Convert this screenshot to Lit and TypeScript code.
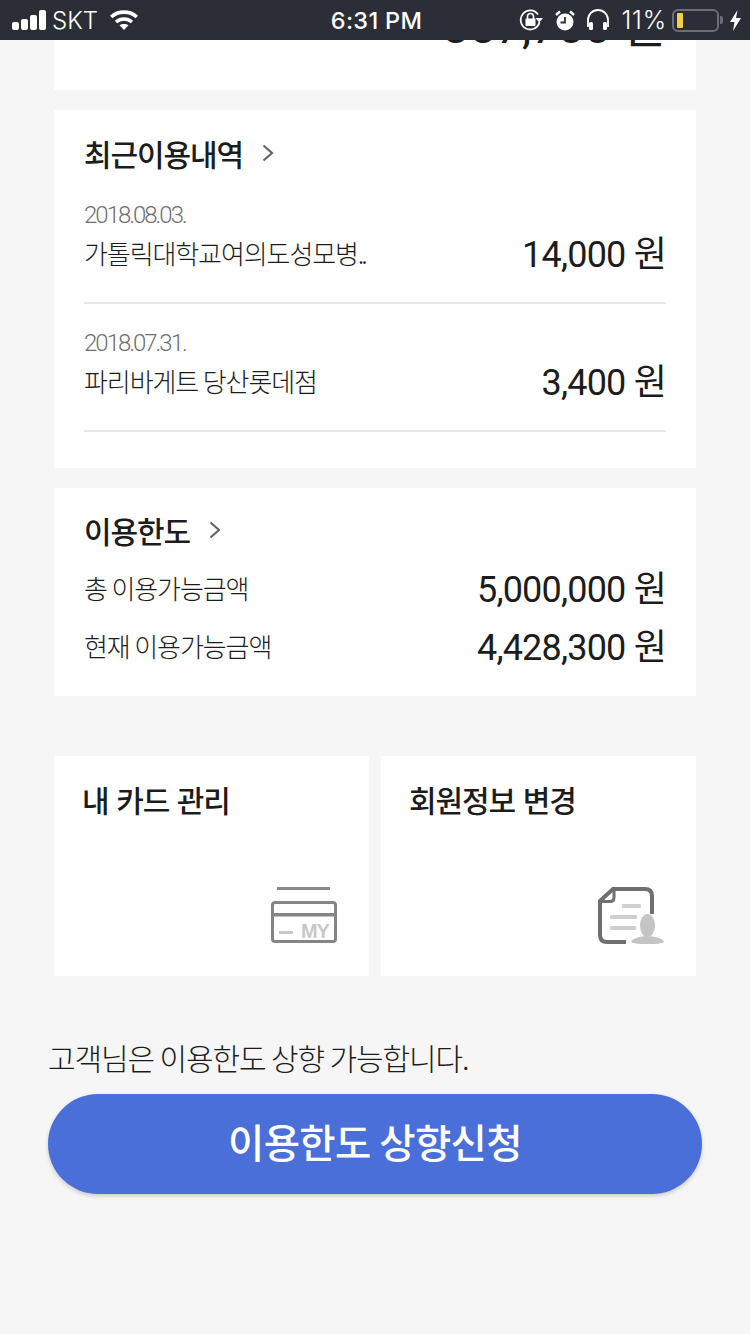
import { LitElement, css, html, svg, unsafeCSS } from 'lit';
import { customElement } from 'lit/decorators.js';

const FONT = unsafeCSS(`'Noto Sans CJK KR', 'Noto Sans', sans-serif`);
const NUM_FONT = unsafeCSS(`Roboto, 'Noto Sans CJK KR', sans-serif`);

const chevron = html`<svg class="chev" width="14" height="20" viewBox="0 0 14 20">
  <path d="M2.5 2.5 L11 10 L2.5 17.5" fill="none" stroke="#666" stroke-width="2.2" />
</svg>`;

const cardIcon = html`<svg width="66" height="57" viewBox="0 0 66 57">
  <rect x="6" y="0" width="53" height="3" fill="#8a8a8a" />
  <rect x="1.5" y="15.5" width="63" height="39" rx="2.5" fill="none" stroke="#858585" stroke-width="3" />
  <rect x="1.5" y="26" width="63" height="3.5" fill="#858585" />
  <rect x="8" y="44" width="14" height="3" fill="#c8c8c8" />
  <text x="30" y="50.5" font-family="'Liberation Sans', sans-serif" font-size="20" font-weight="700" fill="#c8c8c8">MY</text>
</svg>`;

const docIcon = html`<svg width="66" height="57" viewBox="0 0 66 57">
  <path d="M28 55 H9 Q2 55 2 48 V14 L15 2 H47 Q54 2 54 9 V27" fill="none" stroke="#6f6f6f" stroke-width="4" />
  <path d="M3 14.5 H12 Q16 14.5 16 10.5 V2" fill="none" stroke="#6f6f6f" stroke-width="3" />
  <rect x="24" y="17" width="19" height="4" rx="1" fill="#cfcfcf" />
  <rect x="12" y="28" width="27" height="4" rx="1" fill="#cfcfcf" />
  <rect x="12" y="39" width="26" height="4" rx="1" fill="#cfcfcf" />
  <ellipse cx="49.5" cy="38.5" rx="7.5" ry="11.5" fill="#c4c4c4" />
  <path d="M33 55 C36 48 62 47 66 55 C62 58 38 58 33 55 Z" fill="#c4c4c4" />
</svg>`;

const wifiPaths = svg`
  <path d="M1.2 7 C8 0.5 20 0.5 26.8 7" fill="none" stroke="#fff" stroke-width="3.6" />
  <path d="M6 12 C10.5 8 17.5 8 22 12" fill="none" stroke="#fff" stroke-width="3.4" />
  <path d="M9.5 15.3 C12 13.4 16 13.4 18.5 15.3 L14 20 Z" fill="#fff" />`;

@customElement('status-bar')
export class StatusBar extends LitElement {
  static styles = css`
    :host {
      display: flex;
      align-items: center;
      justify-content: space-between;
      position: relative;
      height: 40px;
      background: #2b2e37;
      color: #fff;
      font-family: 'Inter', 'Liberation Sans', sans-serif;
      padding: 0 9px 0 12px;
      box-sizing: border-box;
    }
    .side {
      display: flex;
      align-items: center;
      width: 300px;
    }
    .right {
      justify-content: flex-end;
    }
    .time {
      font-weight: 500;
      font-size: 23.5px;
      letter-spacing: 0.3px;
    }
    .carrier {
      margin: 0 12px 0 6px;
      font-size: 24px;
      font-weight: 300;
    }
    .signal {
      display: flex;
      align-items: flex-end;
      gap: 2px;
      height: 20px;
    }
    .signal i {
      width: 7px;
      border-radius: 2px;
      background: #fff;
    }
    .pct {
      font-weight: 300;
      margin: 0 5px 0 11px;
      font-size: 25px;
      letter-spacing: 0.8px;
    }
    .batt {
      width: 47px;
      height: 23px;
      border: 2px solid #6c6e74;
      border-radius: 6px;
      box-sizing: border-box;
      padding: 2px 3px;
    }
    .batt i {
      display: block;
      width: 6px;
      height: 100%;
      background: #f5cf45;
      border-radius: 1px;
    }
    .nub {
      width: 3px;
      height: 8px;
      background: #6c6e74;
      margin: 0 7px 0 1px;
      border-radius: 0 2px 2px 0;
    }
    svg {
      display: block;
    }
    .lock {
      margin-right: 12px;
    }
    .alarm {
      margin-right: 11px;
    }
  `;

  render() {
    return html`
      <div class="side">
        <div class="signal">
          <i style="height:8px"></i><i style="height:11px"></i><i style="height:15px"></i><i style="height:20px"></i>
        </div>
        <span class="carrier">SKT</span>
        <svg width="28" height="20" viewBox="0 0 28 20">${wifiPaths}</svg>
      </div>
      <span class="time">6:31 PM</span>
      <div class="side right">
        <svg class="lock" width="24" height="22" viewBox="0 0 24 22">
          <path d="M19 5.5 A9.5 9.5 0 1 0 20.5 13" fill="none" stroke="#fff" stroke-width="1.8" />
          <path d="M16.5 9 L24 9 L20.2 13.5 Z" fill="#fff" />
          <rect x="6.5" y="9.5" width="10" height="7.5" rx="1" fill="#fff" />
          <path d="M8.5 10 V7.5 A3 3 0 0 1 14.5 7.5 V10" fill="none" stroke="#fff" stroke-width="1.6" />
        </svg>
        <svg class="alarm" width="20" height="21" viewBox="0 0 20 21">
          <circle cx="10" cy="12" r="8.5" fill="#fff" />
          <path d="M10 7 V12.5 H5.5" fill="none" stroke="#2b2e37" stroke-width="1.8" />
          <path d="M1 5 L5 1.5 M19 5 L15 1.5" stroke="#fff" stroke-width="2.4" />
        </svg>
        <svg width="24" height="22" viewBox="0 0 24 22">
          <path d="M2 18 V11 A10 10 0 0 1 22 11 V18" fill="none" stroke="#fff" stroke-width="1.8" />
          <rect x="3" y="13" width="4" height="8" rx="1.5" fill="#fff" />
          <rect x="17" y="13" width="4" height="8" rx="1.5" fill="#fff" />
        </svg>
        <span class="pct">11%</span>
        <div class="batt"><i></i></div>
        <div class="nub"></div>
        <svg width="11" height="21" viewBox="0 0 11 21">
          <path d="M7.5 0 L0 12 H4.5 L3 21 L11 8 H6 Z" fill="#fff" />
        </svg>
      </div>
    `;
  }
}

@customElement('app-root')
export class AppRoot extends LitElement {
  static styles = css`
    :host {
      display: block;
      width: 750px;
      height: 1334px;
      overflow: hidden;
      background: #f6f6f6;
      font-family: ${FONT};
      color: #1c1c1c;
    }
    main {
      padding: 0 54px;
    }
    .card {
      background: #fff;
      box-sizing: border-box;
    }
    .top {
      height: 50px;
      overflow: hidden;
      margin-bottom: 20px;
      padding-right: 30px;
      text-align: right;
    }
    .top .amount {
      margin: -37px 0 0;
      font-size: 47px;
      letter-spacing: 0.1px;
    }
    .recent {
      height: 358px;
      padding: 20px 30px 0;
      margin-bottom: 20px;
    }
    .limit {
      height: 208px;
      padding: 19px 30px 0;
      margin-bottom: 60px;
    }
    .head {
      display: flex;
      align-items: center;
      gap: 18px;
      height: 46px;
      font-size: 30px;
      font-weight: 500;
      letter-spacing: -1.1px;
    }
    .chev {
      display: block;
    }
    .tx {
      height: 128px;
      border-bottom: 2px solid #e6e6e6;
      box-sizing: border-box;
      padding-top: 26px;
    }
    .date {
      font-family: ${NUM_FONT};
      font-size: 24px;
      line-height: 26px;
      font-weight: 300;
      color: #6f6f6f;
      letter-spacing: -2px;
    }
    .row {
      display: flex;
      align-items: center;
      justify-content: space-between;
    }
    .name {
      font-size: 26px;
      font-weight: 300;
      letter-spacing: -1.1px;
    }
    .dots {
      letter-spacing: -3px;
    }
    .amount {
      font-family: ${NUM_FONT};
      font-size: 36px;
      line-height: 48px;
      font-weight: 400;
      letter-spacing: -0.8px;
      white-space: nowrap;
      margin: 3px 0 -3px;
    }
    .limit .head {
      margin-bottom: 5px;
    }
    .limit .row {
      height: 58px;
    }
    .tiles {
      display: grid;
      grid-template-columns: 315px 315px;
      gap: 12px;
      margin-bottom: 59px;
    }
    .tile {
      height: 220px;
      display: flex;
      flex-direction: column;
      justify-content: space-between;
      padding: 20px 32px 32px 28px;
      font-size: 30px;
      font-weight: 500;
      letter-spacing: -1.1px;
      word-spacing: 2px;
      line-height: 46px;
    }
    .tile svg {
      display: block;
      align-self: flex-end;
    }
    .notice {
      padding: 0 48px;
    }
    .notice p {
      margin: 0 0 15px;
      font-size: 30px;
      line-height: 44px;
      font-weight: 300;
      letter-spacing: -1.1px;
    }
    .cta {
      display: block;
      width: 654px;
      height: 100px;
      padding: 0 0 8px;
      border: 0;
      border-radius: 50px;
      background: #4a6fd8;
      color: #fff;
      font-family: inherit;
      font-size: 39.5px;
      font-weight: 500;
      letter-spacing: -0.6px;
      box-shadow: 0 2px 4px rgba(0, 0, 0, 0.18);
    }
  `;

  render() {
    return html`
      <status-bar></status-bar>
      <main>
        <section class="card top"><div class="amount">857,700 원</div></section>

        <section class="card recent">
          <div class="head">최근이용내역 ${chevron}</div>
          <div class="tx">
            <div class="date">2018.08.03.</div>
            <div class="row"><span class="name">가톨릭대학교여의도성모병<span class="dots">..</span></span><span class="amount">14,000 원</span></div>
          </div>
          <div class="tx">
            <div class="date">2018.07.31.</div>
            <div class="row"><span class="name">파리바게트 당산롯데점</span><span class="amount">3,400 원</span></div>
          </div>
        </section>

        <section class="card limit">
          <div class="head">이용한도 ${chevron}</div>
          <div class="row"><span class="name">총 이용가능금액</span><span class="amount">5,000,000 원</span></div>
          <div class="row"><span class="name">현재 이용가능금액</span><span class="amount">4,428,300 원</span></div>
        </section>

        <div class="tiles">
          <section class="card tile">내 카드 관리 ${cardIcon}</section>
          <section class="card tile">회원정보 변경 ${docIcon}</section>
        </div>
      </main>
      <div class="notice">
        <p>고객님은 이용한도 상향 가능합니다.</p>
        <button class="cta">이용한도 상향신청</button>
      </div>
    `;
  }
}
